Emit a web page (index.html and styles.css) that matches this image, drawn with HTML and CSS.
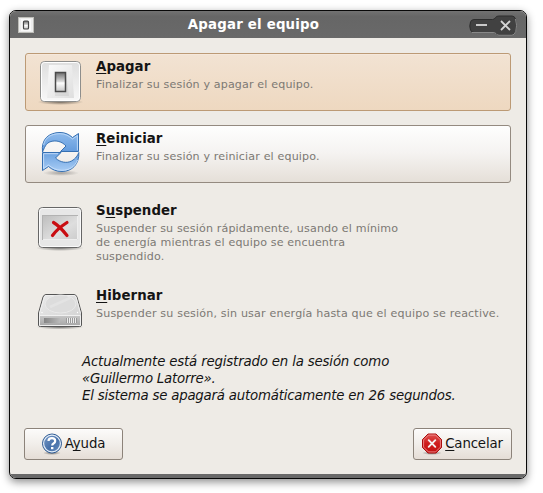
FILE: index.html
```html
<!DOCTYPE html>
<html lang="es">
<head>
<meta charset="utf-8">
<title>Apagar el equipo</title>
<link rel="stylesheet" href="styles.css">
</head>
<body>
<svg class="defs" width="0" height="0" aria-hidden="true">
  <defs>
    <linearGradient id="plate" x1="0" y1="0" x2="0" y2="1"><stop offset="0" stop-color="#dedede"/><stop offset="1" stop-color="#f8f8f8"/></linearGradient>
    <linearGradient id="inner" x1="0" y1="0" x2="1" y2="1"><stop offset="0" stop-color="#fafafa"/><stop offset="1" stop-color="#dedede"/></linearGradient>
    <linearGradient id="rocker" x1="0" y1="0" x2="0" y2="1"><stop offset="0" stop-color="#6c6c6c"/><stop offset=".48" stop-color="#dcdcdc"/><stop offset=".55" stop-color="#fff"/><stop offset="1" stop-color="#c4c4c4"/></linearGradient>
    <linearGradient id="blue" x1="0" y1="0" x2="0" y2="1"><stop offset="0" stop-color="#6ba1df"/><stop offset="1" stop-color="#a9cdf5"/></linearGradient>
    <linearGradient id="blue2" x1="0" y1="0" x2="0" y2="1"><stop offset="0" stop-color="#8fbbec"/><stop offset="1" stop-color="#639bdd"/></linearGradient>
    <linearGradient id="screen" x1="0" y1="0" x2="1" y2="1"><stop offset="0" stop-color="#bdbdbd"/><stop offset=".6" stop-color="#dedede"/><stop offset="1" stop-color="#cdcdcd"/></linearGradient>
    <linearGradient id="disk" x1="0" y1="0" x2="1" y2="1"><stop offset="0" stop-color="#e9e9e9"/><stop offset="1" stop-color="#d0d0d0"/></linearGradient>
    <linearGradient id="front" x1="0" y1="0" x2="0" y2="1"><stop offset="0" stop-color="#c9c9c9"/><stop offset="1" stop-color="#a6a6a6"/></linearGradient>
    <linearGradient id="slot" x1="0" y1="0" x2="1" y2="0"><stop offset="0" stop-color="#858585"/><stop offset="1" stop-color="#bababa"/></linearGradient>
    <linearGradient id="help" x1="0" y1="0" x2="1" y2="1"><stop offset="0" stop-color="#7e9fcb"/><stop offset=".55" stop-color="#4670a9"/><stop offset="1" stop-color="#6b91c3"/></linearGradient>
    <linearGradient id="stop" x1="0" y1="0" x2="0" y2="1"><stop offset="0" stop-color="#df5353"/><stop offset=".5" stop-color="#cf1c1c"/><stop offset="1" stop-color="#c21010"/></linearGradient>
    <radialGradient id="shade"><stop offset="0" stop-color="#000" stop-opacity=".5"/><stop offset="1" stop-color="#000" stop-opacity="0"/></radialGradient>
  </defs>
</svg>
<main class="window">
  <header class="titlebar">
    <svg class="app-icon" width="16" height="16" viewBox="0 0 16 16"><rect x=".5" y=".5" width="15" height="15" fill="#ececec" stroke="#bdbdb8"/><rect x="3" y="2" width="10" height="12" fill="#f8f8f8"/><rect x="5.500" y="4" width="5" height="8" rx="1" fill="url(#rocker)" stroke="#454545" stroke-width="1.200"/></svg>
    <h1 class="title">Apagar el equipo</h1>
    <svg class="controls" width="49" height="21" viewBox="0 0 49 21"><path d="M5 4.500H23.500Q25.500 4.500 26.500 2.500Q27.500 1 30 1H43Q45.500 1 46.500 4Q48.500 10.500 46.500 16.500Q45.500 20 43 20H30Q28 20 27 18.500Q26 17.500 24 17.500H5Q2.500 17.500 1.500 15Q0 11 1.500 7Q2.500 4.500 5 4.500Z" fill="#414141" stroke="#2e2e2e"/><path d="M3 17.500H24Q26 17.500 27 18.500Q28 20.200 30 20.200H43Q45.500 20 46.700 16.500Q48.500 10.500 46.500 4" fill="none" stroke="#a0a0a0" stroke-width=".8"/><path d="M7 10H18" stroke="#c9c9c9" stroke-width="2"/><path d="M32 6L41 15M41 6L32 15" stroke="#d5d5d5" stroke-width="1.800"/></svg>
  </header>
  <div class="content">
    <section class="options">
      <article class="option selected">
        <svg class="icon" width="48" height="48" viewBox="0 0 48 48"><ellipse cx="24.500" cy="44" rx="23" ry="3" fill="url(#shade)"/><rect x="4.500" y="3.500" width="40" height="40" rx="4" fill="url(#plate)" stroke="#8e8e8c"/><rect x="5.500" y="4.500" width="38" height="38" rx="3" fill="none" stroke="#fff"/><path d="M13 7H36L38 40H11Z" fill="url(#inner)"/><path d="M20 15H30L33 38H19Z" fill="#aaa" opacity=".22"/><rect x="19.500" y="14.500" width="10" height="19" fill="url(#rocker)" stroke="#4a4a4a" stroke-width="1.500"/></svg>
        <div class="copy"><h2><u>A</u>pagar</h2><p>Finalizar su sesión y apagar el equipo.</p></div>
      </article>
      <article class="option raised">
        <svg class="icon" width="48" height="48" viewBox="0 0 48 48"><ellipse cx="25" cy="43" rx="18" ry="3" fill="url(#shade)" opacity=".6"/><path d="M6.500 22C5 9 13 2.500 24 2.500C29.500 2.500 33 4.500 36.500 7.500L42.500 3.500V21.500H24.500L30 16C26 11.500 20 10 15 11.500C9.500 13 8.500 18 6.500 22Z" fill="url(#blue2)" stroke="#3670b2"/><path d="M7.600 15C9 7.500 15 3.700 24 3.700C29.500 3.700 33 6 36.500 9L41.400 5.600V20.400" fill="none" stroke="#c2dcf9" stroke-width=".9"/><path d="M42.800 22.500C43.500 34 36 41.500 26 41.500C20 41.500 16 39.500 12.500 36.500L6.500 40.500V22.500H25L19.500 28C24 32.500 31 33.500 35.500 31C40 28.500 41.500 25.500 42.800 22.500Z" fill="url(#blue)" stroke="#3670b2"/><path d="M41.500 30C39 37 33 40.300 26 40.300C20 40.300 16 38 12.500 35L7.600 38.500V23.700H22" fill="none" stroke="#c9e0fa" stroke-width=".9"/></svg>
        <div class="copy"><h2><u>R</u>einiciar</h2><p>Finalizar su sesión y reiniciar el equipo.</p></div>
      </article>
      <article class="option suspend">
        <svg class="icon" width="48" height="48" viewBox="0 0 48 48"><ellipse cx="24" cy="44" rx="24" ry="3" fill="url(#shade)"/><rect x="2.500" y="3.500" width="43" height="40" rx="4" fill="#e7e7e7" stroke="#666"/><rect x="3.500" y="4.500" width="41" height="38" rx="3" fill="none" stroke="#fafafa"/><rect x="6.500" y="11.500" width="35" height="24" fill="url(#screen)" stroke="#b2b2b2"/><path d="M7 35.500H41.500V12" fill="none" stroke="#eee"/><path d="M17.500 18.500Q23.500 22 31 31.500M31 18.500Q21 25 16.500 31.500" fill="none" stroke="#c90d12" stroke-width="3.200" stroke-linecap="round"/></svg>
        <div class="copy"><h2>S<u>u</u>spender</h2><p>Suspender su sesión rápidamente, usando el mínimo<br>de energía mientras el equipo se encuentra<br>suspendido.</p></div>
      </article>
      <article class="option hibernate">
        <svg class="icon" width="48" height="48" viewBox="0 0 48 48"><ellipse cx="24" cy="42" rx="24" ry="2.500" fill="url(#shade)"/><path d="M10 9.500H38Q40 9.500 41 12L45.500 28V40Q45.500 41.500 43.500 41.500H4.500Q2.500 41.500 2.500 40V28L7 12Q8 9.500 10 9.500Z" fill="url(#disk)" stroke="#555"/><path d="M3 30H45V40Q45 41 43.500 41H4.500Q3 41 3 40Z" fill="url(#front)"/><path d="M3.500 30.500H44.500V40.500H3.500V28.500L8.500 11.500Q9 10.500 10 10.500H38Q39.500 10.500 40 12L44.500 28.500" fill="none" stroke="#f0f0f0"/><ellipse cx="24.500" cy="19" rx="15.500" ry="9" fill="#dcdcdc" stroke="#e9e9e9"/><path d="M14 22L34 13" stroke="#eee" stroke-width="3" opacity=".4"/><circle cx="6" cy="27.500" r=".7" fill="#fff"/><circle cx="41.500" cy="27.500" r=".7" fill="#fff"/><rect x="8" y="33" width="16" height="5" fill="url(#slot)"/><path d="M30.500 33V38M32.500 33V38M34.500 33V38M36.500 33V38M38.500 33V38M40.500 33V38" stroke="#999"/><path d="M31.500 33V38M33.500 33V38M35.500 33V38M37.500 33V38M39.500 33V38" stroke="#ececec"/></svg>
        <div class="copy"><h2><u>H</u>ibernar</h2><p class="wide">Suspender su sesión, sin usar energía hasta que el equipo se reactive.</p></div>
      </article>
    </section>
    <p class="notice"><span class="line1">Actualmente está registrado en la sesión como</span><br>«Guillermo Latorre».<br>El sistema se apagará automáticamente en 26 segundos.</p>
    <footer class="actions">
      <button class="button help"><svg width="22" height="22" viewBox="0 0 22 22"><ellipse cx="11" cy="20" rx="9" ry="2" fill="url(#shade)"/><circle cx="11" cy="10.500" r="9.500" fill="url(#help)" stroke="#315c93"/><circle cx="11" cy="10.500" r="8.400" fill="none" stroke="#e4edf7" stroke-width="1.200"/><path d="M7.500 8Q7.500 5.200 11 5.200Q14.200 5.200 14.200 8Q14.200 9.500 12.500 10.500Q11.200 11.300 11.200 12.500" fill="none" stroke="#fff" stroke-width="2.200"/><rect x="10" y="14" width="2.400" height="2.200" fill="#fff"/></svg><span>A<u>y</u>uda</span></button>
      <button class="button cancel"><svg width="22" height="22" viewBox="0 0 22 22"><ellipse cx="11" cy="20" rx="10" ry="2" fill="url(#shade)"/><path d="M7 1H15L20.500 6.500V14.500L15 20H7L1.500 14.500V6.500Z" fill="url(#stop)" stroke="#a90d0d"/><path d="M7.400 2.100H14.600L19.400 6.900V14.100L14.600 18.900H7.400L2.600 14.100V6.900Z" fill="none" stroke="#ed8b8b" stroke-width=".9"/><path d="M7.700 7.200L14.300 13.800M14.300 7.200L7.700 13.800" stroke="#f5f0f0" stroke-width="1.900" stroke-linecap="round"/></svg><span><u>C</u>ancelar</span></button>
    </footer>
  </div>
  <div class="bottom-edge"></div>
</main>
</body>
</html>
```
FILE: styles.css
```css
* { box-sizing: border-box; }
body { margin: 0; padding: 10px 0 0 9px; height: 493px; overflow: hidden; background: #fff; font-family: "DejaVu Sans", sans-serif; color: #141414; }
.defs { position: absolute; }
h1, h2, p { margin: 0; }
u { text-decoration-thickness: 1px; text-underline-offset: 2px; text-decoration-skip-ink: none; }
.window { width: 518px; height: 469px; border: 1px solid #080808; border-radius: 7px; background: #eeebe6; box-shadow: 0 3px 9px rgba(0,0,0,.45); overflow: hidden; display: flex; flex-direction: column; }
.titlebar { flex: none; height: 27px; background: linear-gradient(#727272, #666 20%, #696969); display: flex; align-items: center; padding: 0 8px; }
.app-icon { margin-top: 1px; }
.title { flex: 1; text-align: center; color: #fff; font-size: 13.33px; letter-spacing: .2px; line-height: 27px; padding-left: 3px; }
.controls { margin: 1px 0 0 -1px; }
.content { height: 436px; padding: 15px 14px 0; }
.option { width: 486px; height: 58px; margin: 0 0 14px 1px; padding: 4px 10px; border: 1px solid transparent; border-radius: 3px; display: flex; }
.selected { border-color: #bc9a75; background: linear-gradient(#f2e3d3, #eed8c0); box-shadow: inset 0 1px #f5e8dc; }
.raised { border-color: #948a80; background: linear-gradient(#fefefe, #f5f3f1 48%, #e5dfd8); }
.icon { flex: none; }
.suspend { height: 71px; }
.suspend .icon { margin-top: 2px; }
.hibernate .icon { margin-top: -2px; }
.hibernate { height: 50px; margin-bottom: 0; }
.copy { margin-left: 12px; white-space: nowrap; }
.copy h2 { font-size: 13.33px; letter-spacing: .05px; line-height: 17px; }
.copy p { margin-top: 3px; font-size: 11.1px; letter-spacing: .145px; line-height: 14px; color: #7c7974; }
.copy .wide { letter-spacing: .165px; }
.notice { margin: 21px 0 0 58px; font-size: 13.33px; letter-spacing: -.21px; line-height: 17px; font-style: italic; white-space: nowrap; }
.line1 { letter-spacing: -.17px; }
.actions { margin-top: 24px; display: flex; justify-content: space-between; }
.button { width: 99px; height: 32px; padding: 0; border: 1px solid #8c837a; border-radius: 3px; background: linear-gradient(#fcfbfa, #f1eeea 50%, #e5ddd6); box-shadow: inset 0 1px #fff; color: #141414; font: 13.33px/17px "DejaVu Sans", sans-serif; letter-spacing: -.15px; display: flex; justify-content: center; align-items: center; gap: 2px; }
.button span { margin-bottom: 2px; }
.help, .cancel { padding-right: 1px; }
.bottom-edge { flex: none; height: 4px; background: #696969; }
```
